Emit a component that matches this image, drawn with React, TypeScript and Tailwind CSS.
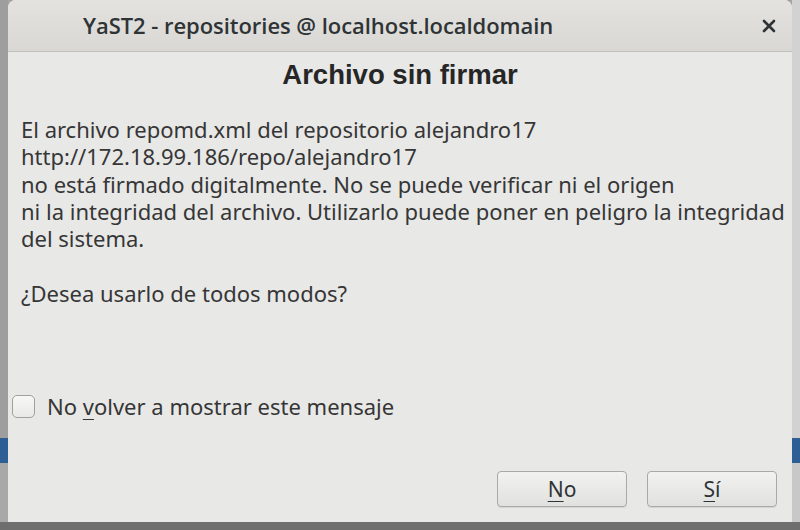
import React from "react";

const CloseIcon = () => (
  <svg width="14" height="14" viewBox="0 0 14 14">
    <path d="M2 2 L12 12 M12 2 L2 12" stroke="#2e3436" strokeWidth="2.6" strokeLinecap="round" />
  </svg>
);

const Button = ({ mnemonic, rest }: { mnemonic: string; rest: string }) => (
  <button className="w-[130px] h-[36px] rounded-[4px] border border-[#a9a9a6] bg-gradient-to-b from-[#f2f2f1] to-[#e1e1df] text-[21px] leading-none text-[#2e3436] shadow-[0_1px_0_rgba(0,0,0,0.08)]">
    <span className="underline underline-offset-[4px] decoration-1">{mnemonic}</span>
    {rest}
  </button>
);

export default function App() {
  return (
    <div
      className="w-[800px] h-[530px] overflow-hidden bg-[#a3a3a3] flex flex-col"
      style={{ fontFamily: '"Noto Sans", "DejaVu Sans", sans-serif' }}
    >
      <div className="flex h-[522px]">
        <div className="w-[8px] flex flex-col">
          <div className="h-[438px] bg-[#9e9e9e]" />
          <div className="h-[25px] bg-[#2d5f95]" />
          <div className="flex-1 bg-[#a8a8a8]" />
        </div>
        <div className="w-[784px] flex flex-col bg-[#e8e8e7] rounded-t-[8px] overflow-hidden">
          <div className="h-[52px] flex items-center justify-between bg-gradient-to-b from-[#e4e2df] to-[#dad8d4] border-b border-[#c4c1bb] pl-[75px] pr-[16px]">
            <span
              className="text-[22px] font-semibold text-[#2e3436] tracking-[-0.05px]"
              style={{ fontFamily: '"Open Sans", "Noto Sans", sans-serif' }}
            >
              YaST2 - repositories @ localhost.localdomain
            </span>
            <CloseIcon />
          </div>
          <div className="flex-1 flex flex-col px-[13px] text-[#363636]">
            <h1
              className="text-center text-[27.5px] font-bold text-[#262626] mt-[7px] leading-[32px]"
              style={{ fontFamily: '"Liberation Sans", Arial, sans-serif' }}
            >
              Archivo sin firmar
            </h1>
            <div className="mt-[25px] text-[22px] leading-[27.3px]">
              <p>El archivo repomd.xml del repositorio alejandro17</p>
              <p>http://172.18.99.186/repo/alejandro17</p>
              <p>no está firmado digitalmente. No se puede verificar ni el origen</p>
              <p className="whitespace-nowrap">ni la integridad del archivo. Utilizarlo puede poner en peligro la integridad</p>
              <p>del sistema.</p>
              <p>&nbsp;</p>
              <p>¿Desea usarlo de todos modos?</p>
            </div>
            <div className="mt-[83px] flex items-center gap-[12px] -ml-[9px]">
              <span className="w-[23px] h-[23px] rounded-[5px] border border-[#a0a09d] bg-gradient-to-b from-[#f7f7f6] to-[#e9e9e8]" />
              <span className="text-[22px]">
                No <span className="underline underline-offset-[4px] decoration-1">v</span>olver a mostrar este mensaje
              </span>
            </div>
            <div className="mt-[48px] flex justify-end gap-[20px] pr-[2px]">
              <Button mnemonic="N" rest="o" />
              <Button mnemonic="S" rest="í" />
            </div>
          </div>
        </div>
        <div className="w-[8px] flex flex-col">
          <div className="h-[438px] bg-[#d2d2d2]" />
          <div className="h-[25px] bg-[#2d5f95]" />
          <div className="flex-1 bg-[#c8c8c8]" />
        </div>
      </div>
      <div className="flex-1 bg-[#6e6e6e]" />
    </div>
  );
}
